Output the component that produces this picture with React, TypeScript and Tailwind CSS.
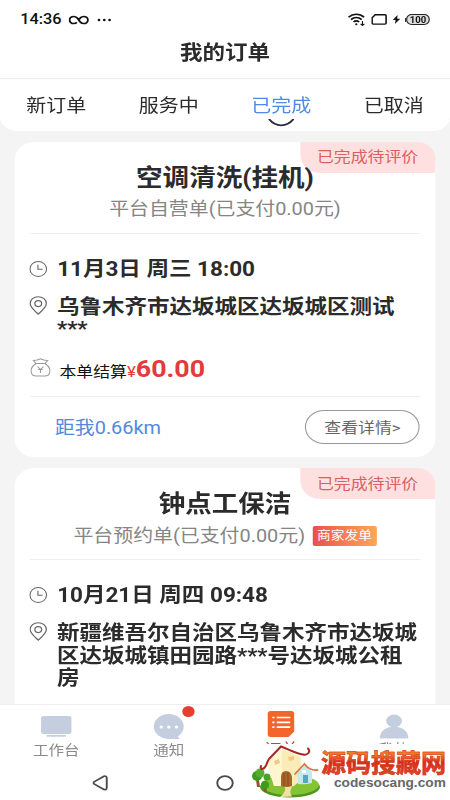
import type { ReactNode } from "react";

const tabs = ["新订单", "服务中", "已完成", "已取消"];

const ClockIcon = () => (
  <svg className="w-4 h-4 shrink-0" viewBox="0 0 16 16" fill="none" stroke="#666" strokeWidth="1">
    <circle cx="8" cy="8" r="7.4" />
    <path d="M7.7 3.8v4.5h4.2" />
  </svg>
);

const PinIcon = () => (
  <svg className="w-4 h-[19px] shrink-0" viewBox="0 0 16 19" fill="none" stroke="#666" strokeWidth="1.1">
    <path d="M8 18.2C5.5 15.5.8 11.5.8 7.6a7.2 6.9 0 0 1 14.4 0c0 3.9-4.7 7.9-7.2 10.6z" />
    <circle cx="8" cy="7.6" r="3" />
  </svg>
);

const BagIcon = () => (
  <svg className="w-[18px] h-[19px] shrink-0" viewBox="0 0 18 19" fill="none" stroke="#999" strokeWidth="1">
    <path d="M5.2 5.5C2.5 7.3.6 9.6.6 12.7c0 3.6 2 5.4 5 5.4h6.8c3 0 5-1.8 5-5.4 0-3.1-1.9-5.4-4.6-7.2" />
    <path d="M5 5.5 2.7 2.5 6 2l3-1.3L12 2l3.3.5L13 5.5" />
    <path d="M4 5.5h10" />
    <path d="m6.3 8.5 2.7 3 2.7-3M9 11.5V15M7 11.5h4" />
  </svg>
);

const StatusBar = () => (
  <div className="h-[34px] pt-[5px] pl-[18px] pr-[18px] flex items-center justify-between text-[#111]">
    <div className="flex items-center">
      <span className="pt-[2px] font-[Roboto] font-medium text-[14.5px] leading-none">14:36</span>
      <svg className="ml-[6px] w-[18px] h-[10px]" viewBox="0 0 18 10" fill="none" stroke="#111" strokeWidth="1.7">
        <path d="M7.3 7.3A3.7 3.5 0 1 1 7.3 2.7Q8.1 3.5 9 5T10.7 7.3A3.7 3.5 0 1 0 10.7 2.7Q10 3.4 9.5 4.2" />
      </svg>
      <svg className="ml-[7px] w-[14px] h-[4px]" viewBox="0 0 14 4" fill="#111">
        <circle cx="2" cy="2" r="1.2" />
        <circle cx="6.7" cy="2" r="1.2" />
        <circle cx="11.4" cy="2" r="1.2" />
      </svg>
    </div>
    <div className="flex items-center">
      <svg className="w-[16px] h-[13px]" viewBox="0 0 16 13" fill="none" stroke="#111" strokeWidth="1.6">
        <path d="M.8 4.2C4.8.3 10.7.3 14.6 4.2" />
        <path d="M3 6.6c2.8-2.6 6.7-2.6 9.5 0" />
        <path d="M5.2 9c1.5-1.4 3.6-1.4 5 0" />
        <circle cx="7.7" cy="11.3" r="1" fill="#111" stroke="none" />
        <path d="M13.2 8v4.6M11.5 10.8l1.7 1.7 1.7-1.7" strokeWidth="1" />
      </svg>
      <svg className="ml-[5px] w-[14px] h-[11px]" viewBox="0 0 14 11" fill="none" stroke="#111" strokeWidth="1.4">
        <path d="M3.5.8h8.7q1 0 1 1v7.3q0 1-1 1H1.8q-1 0-1-1V3.7z" />
      </svg>
      <svg className="ml-[5px] w-[7px] h-[9px]" viewBox="0 0 7 9" fill="#111">
        <path d="M4.3 0 .2 5h2.5l-.7 4L6.8 3.7H4.1z" />
      </svg>
      <div className="ml-[4px] w-[1.5px] h-[4px] bg-[#333]" />
      <div className="w-[21px] h-[11px] rounded-[5px] border border-[#222] bg-[#ddd] flex items-center justify-center font-[Roboto] font-bold text-[8.5px] leading-[9px] pt-px">
        100
      </div>
    </div>
  </div>
);

const Header = () => (
  <header className="bg-white rounded-b-[15px] h-[131px]">
    <StatusBar />
    <h1 className="h-[44px] pb-[6px] flex items-center justify-center text-[20px] font-bold text-[#2b2b2b]">
      我的订单
    </h1>
    <nav className="border-t border-[#ececec] h-[53px] grid grid-cols-4">
      {tabs.map((tab) => (
        <div key={tab} className="flex flex-col items-center pt-[14px]">
          <span
            className={
              tab === "已完成"
                ? "text-[17.8px] leading-[26px] text-[#5189e6]"
                : "text-[17.8px] leading-[26px] text-[#2b2b2b]"
            }
          >
            {tab}
          </span>
          {tab === "已完成" && (
            <svg className="w-[24px] h-[9px]" viewBox="0 0 24 9" fill="none" stroke="#2b2b3b" strokeWidth="1.8" strokeLinecap="round">
              <path d="M1.5 0.5c5.5 7.7 15.5 7.7 21 0" />
            </svg>
          )}
        </div>
      ))}
    </nav>
  </header>
);

type CardProps = {
  title: string;
  subtitle: string;
  tag?: string;
  date: string;
  address: string;
  children?: ReactNode;
};

const OrderCard = ({ title, subtitle, tag, date, address, children }: CardProps) => (
  <section className="relative bg-white rounded-[18px] px-[13.5px] pt-[19.5px]">
    <div className="absolute top-0 right-0 w-[120px] h-[31px] rounded-tr-[16px] rounded-bl-[18px] bg-[#ffe0e0] text-[#d9605f] text-[15px] pt-px flex items-center justify-center">
      已完成待评价
    </div>
    <h2 className="relative text-center text-[23.6px] leading-[34px] font-bold text-[#2b2b2b]">{title}</h2>
    <div className="h-[38.5px] pb-[8px] flex items-center justify-center border-b border-[#eee] text-[17.7px] text-[#858585]">
      <span>{subtitle}</span>
      {tag && (
        <span className="ml-[6.5px] w-[57px] h-[20px] rounded-[2px] bg-linear-to-r from-[#ee4b50] to-[#fba755] text-white text-[12.2px] leading-[21px] text-center">
          {tag}
        </span>
      )}
    </div>
    <div className="mt-[21.5px] h-[28px] flex items-center gap-[8.5px] -ml-[0.5px]">
      <ClockIcon />
      <span className="text-[20px] font-bold text-[#2b2b2b]">{date}</span>
    </div>
    <div className="mt-[12.5px] flex gap-[8.3px] -ml-[0.5px]">
      <PinIcon />
      <p className="w-[321px] text-[20px] leading-[22.7px] font-bold text-[#2b2b2b] break-all whitespace-pre-line">
        {address}
      </p>
    </div>
    {children}
  </section>
);

const navItems = [
  {
    label: "工作台",
    icon: (
      <svg className="w-[30px] h-[26px]" viewBox="0 0 30 26" fill="#c5cedf">
        <rect x="1.5" y="2" width="27" height="18" rx="2" />
        <rect x="6.5" y="21" width="17" height="1.7" />
      </svg>
    ),
  },
  {
    label: "通知",
    icon: (
      <svg className="w-[30px] h-[26px]" viewBox="0 0 30 26" fill="#c5cedf">
        <ellipse cx="15" cy="12.5" rx="13.3" ry="12.5" />
        <path d="M14 25h10.5l-2-4z" />
        <circle cx="8.3" cy="13" r="1.5" fill="#fff" />
        <circle cx="15" cy="13" r="1.5" fill="#fff" />
        <circle cx="21.9" cy="13" r="1.5" fill="#fff" />
      </svg>
    ),
  },
  {
    label: "订单",
    icon: (
      <svg className="w-[30px] h-[26px]" viewBox="0 0 30 26">
        <path d="M5.5-3h18.5q2.5 0 2.5 2.5v18l-5 5.5H5.5Q3 23 3 20.5v-21Q3-3 5.5-3z" fill="#f4642d" />
        <path d="M7 3.5h2M7 8.3h2M7 13.2h2M11 3.5H23M11 8.3H23M11 13.2H23" stroke="#fff" strokeWidth="1.7" />
      </svg>
    ),
  },
  {
    label: "我的",
    icon: (
      <svg className="w-[30px] h-[26px]" viewBox="0 0 30 26" fill="#c5cedf">
        <ellipse cx="15.3" cy="7" rx="7" ry="6.5" />
        <path d="M2.5 24.5C2.5 17 8 12.8 15.3 12.8S28 17 28 24.5z" />
      </svg>
    ),
  },
];

const labelClass: Record<string, string> = {
  工作台: "text-[13.8px] leading-[20px] text-[#8a8a8a]",
  通知: "text-[13.8px] leading-[20px] text-[#8a8a8a]",
  订单: "-mt-[1px] text-[15px] leading-[20px] text-[#c8431f]",
  我的: "-mt-[1px] text-[13.8px] leading-[20px] text-[#8a8a8a]",
};

const BottomBar = () => (
  <footer className="absolute bottom-0 left-0 w-full h-[96px] bg-white border-t border-[#eee]">
    <div className="h-[61px] grid grid-cols-4">
      {navItems.map((item) => (
        <div key={item.label} className="relative flex flex-col items-center pt-[9px] [&_svg]:overflow-visible">
          {item.icon}
          <span className={labelClass[item.label]}>{item.label}</span>
          {item.label === "通知" && (
            <i className="absolute left-[62px] top-[1px] w-[11px] h-[11px] rounded-full bg-[#e5402f]" />
          )}
        </div>
      ))}
    </div>
    <div className="h-[34px] flex items-center pl-[82px]">
      <svg className="w-[14px] h-[16px]" viewBox="0 0 14 16" fill="none" stroke="#4a4a4a" strokeWidth="1.7" strokeLinejoin="round">
        <path d="M1.6 6.9Q.7 8 1.6 8.9l8.8 5.6q2.2.6 2.5-1.5V2.8q-.3-2.1-2.5-1.5z" />
      </svg>
      <svg className="ml-[96px] w-[16px] h-[16px]" viewBox="0 0 16 16" fill="none" stroke="#4a4a4a" strokeWidth="1.7">
        <circle cx="8" cy="8" r="6.9" />
      </svg>
    </div>
  </footer>
);

const HouseLogo = () => (
  <svg className="absolute left-0 top-0 w-[75px] h-[56px]" viewBox="0 0 75 56">
    <ellipse cx="40" cy="43" rx="30" ry="10.5" fill="#4f9620" />
    <ellipse cx="40" cy="41" rx="29" ry="10" fill="#83c334" />
    <path d="M34 42q4 4-4 11l12-.5q-4-5 1-11z" fill="#f5dfa0" />
    <path d="M6 36h3l1 7H7zM13 42h3l1 6h-3z" fill="#8a5a22" />
    <circle cx="7" cy="32" r="5" fill="#3f9a24" />
    <circle cx="10" cy="29" r="4.5" fill="#54ad2c" />
    <circle cx="17" cy="33" r="3.5" fill="#4aa328" />
    <circle cx="15" cy="41" r="4" fill="#3f9a24" />
    <path d="M18 18 32 5l19 8v23L44 42H24z" fill="#faecb6" />
    <path d="M17 20 32 5v37H24z" fill="#fff6d0" />
    <path d="M31 42v-9q0-6 5-6t6 6v9q-5 2-11 0z" fill="#a9642c" />
    <path d="M34 42V29M38 42V28" stroke="#7e431c" strokeWidth=".8" />
    <path d="m24 17 5-2 1 4-5 2zM38 13l6-1v4l-5 1z" fill="#f2c983" />
    <path d="M12 25c5-1 4-6 7-10L31 2.5c8 3 15 7 22 8 5 1 8-3 5-6" fill="none" stroke="#aa2720" strokeWidth="2" strokeLinecap="round" />
    <path d="M12 25q-2-1-1-3" fill="none" stroke="#aa2720" strokeWidth="2" strokeLinecap="round" />
    <path d="M47 29 55 21l7 7v11q-7 2-14 1z" fill="#c6e8ed" />
    <path d="M45 30 54.5 20q5 7 13 6" fill="none" stroke="#d77945" strokeWidth="1.8" strokeLinecap="round" />
    <path d="M53 31h5v8h-5z" fill="#50a9bd" />
    <path d="M52 26h4v3h-4z" fill="#fff" />
  </svg>
);

const SiteMark = () => (
  <div className="absolute right-0 bottom-0 w-[200px] h-[56px] bg-white">
    <HouseLogo />
    <div className="absolute left-[71px] top-[6px] text-[25px] leading-[27px] font-bold whitespace-nowrap text-transparent bg-clip-text bg-linear-to-b from-[#f47b26] from-15% via-[#d82c1b] via-45% to-[#e04a28] [-webkit-text-stroke:0.5px_#d5351f]">
      源码搜藏网
    </div>
    <div className="absolute left-[84px] top-[33px] font-['Liberation_Sans'] font-bold text-[13.7px] leading-[12px] text-[#666]">
      codesocang.com
    </div>
  </div>
);

const App = () => {
  return (
    <div className="relative w-[450px] h-[800px] overflow-hidden bg-[#f4f4f4] font-['Roboto','Noto_Sans_CJK_SC',sans-serif]">
      <div className="relative w-[400px] h-[800px] overflow-hidden origin-top-left scale-x-[1.125]">
        <Header />
        <main className="px-[13.3px] pt-[10.5px] flex flex-col gap-[10.5px]">
          <OrderCard
            title="空调清洗(挂机)"
            subtitle="平台自营单(已支付0.00元)"
            date="11月3日 周三 18:00"
            address={"乌鲁木齐市达坂城区达坂城区测试\n***"}
          >
            <div className="mt-[11px] flex items-start border-b border-[#eee] h-[45.5px]">
              <div className="pt-[6px]">
                <BagIcon />
              </div>
              <div className="ml-[8px] flex items-baseline leading-[35px] whitespace-nowrap">
                <span className="text-[15px] text-[#111]">本单结算</span>
                <span className="text-[15px] text-[#e5393a]">¥</span>
                <span className="text-[23.8px] font-bold text-[#e5393a]">60.00</span>
              </div>
            </div>
            <div className="h-[60px] pl-[22px] flex items-center justify-between">
              <span className="pt-px text-[17.7px] text-[#5189e0]">距我0.66km</span>
              <button className="w-[102px] h-[34px] rounded-full border border-[#999] pt-px text-[15px] text-[#666]">
                查看详情&gt;
              </button>
            </div>
          </OrderCard>
          <OrderCard
            title="钟点工保洁"
            subtitle="平台预约单(已支付0.00元)"
            tag="商家发单"
            date="10月21日 周四 09:48"
            address="新疆维吾尔自治区乌鲁木齐市达坂城区达坂城镇田园路***号达坂城公租房"
          >
            <div className="h-[80px]" />
          </OrderCard>
        </main>
        <BottomBar />
      </div>
      <SiteMark />
    </div>
  );
};

export default App;
